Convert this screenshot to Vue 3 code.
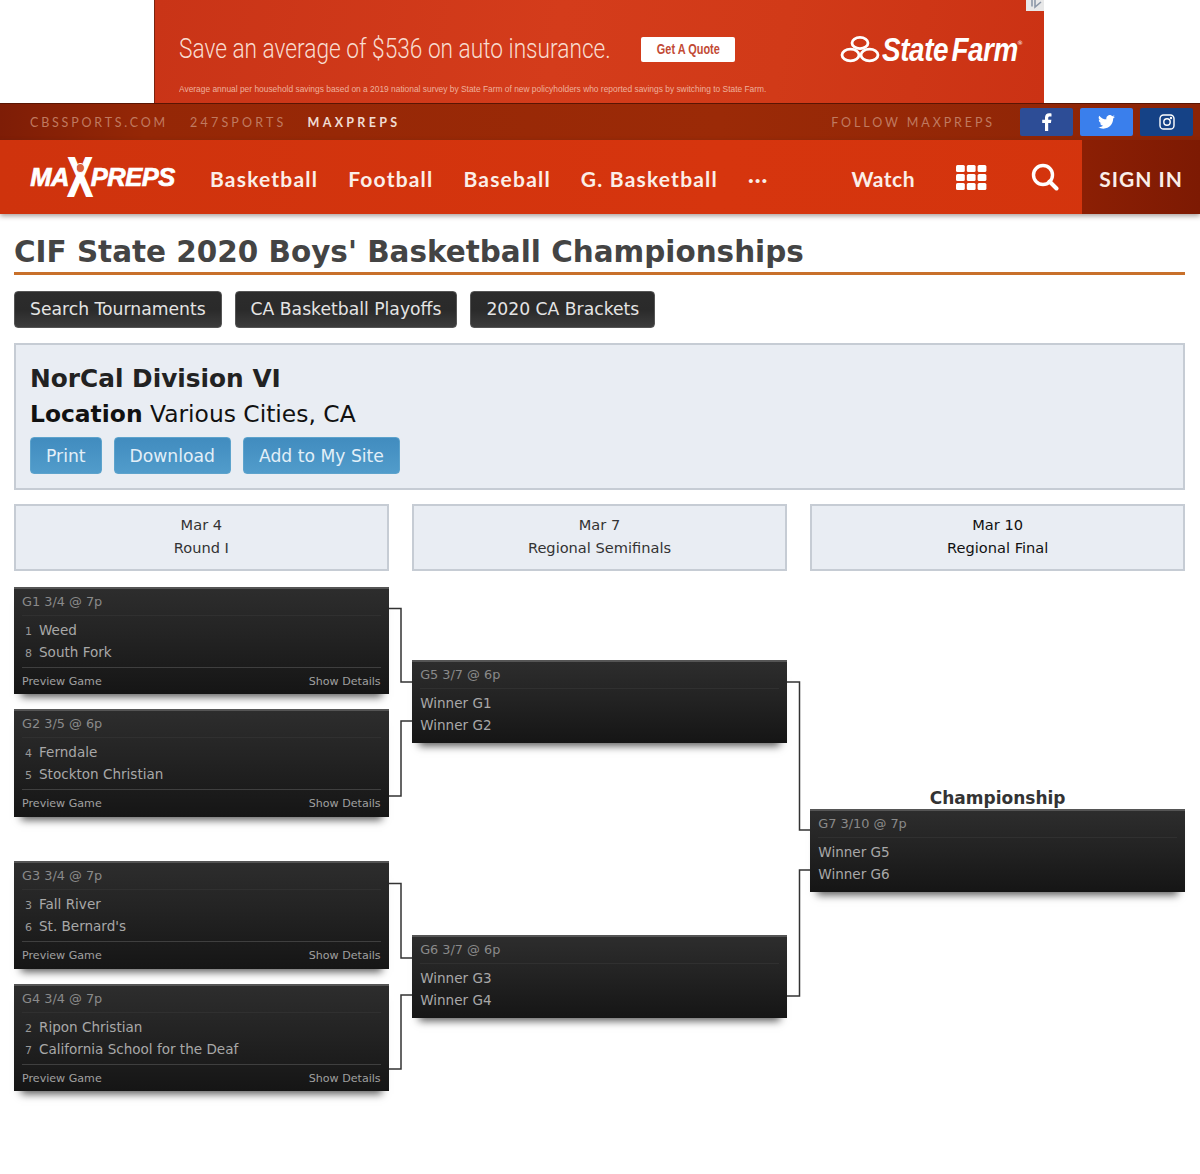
<script setup>
const networks = [
  { name: 'CBSSPORTS.COM', cls: 'cbs' },
  { name: '247SPORTS', cls: 'two47' },
  { name: 'MAXPREPS', cls: 'current' },
]

const navLinks = ['Basketball', 'Football', 'Baseball', 'G. Basketball']

const topButtons = ['Search Tournaments', 'CA Basketball Playoffs', '2020 CA Brackets']
const blueButtons = ['Print', 'Download', 'Add to My Site']

const rounds = [
  {
    id: 'first',
    date: 'Mar 4',
    name: 'Round I',
    games: [
      { title: 'G1 3/4 @ 7p', full: true, teams: [{ seed: 1, name: 'Weed' }, { seed: 8, name: 'South Fork' }] },
      { title: 'G2 3/5 @ 6p', full: true, teams: [{ seed: 4, name: 'Ferndale' }, { seed: 5, name: 'Stockton Christian' }] },
      { title: 'G3 3/4 @ 7p', full: true, teams: [{ seed: 3, name: 'Fall River' }, { seed: 6, name: "St. Bernard's" }] },
      { title: 'G4 3/4 @ 7p', full: true, teams: [{ seed: 2, name: 'Ripon Christian' }, { seed: 7, name: 'California School for the Deaf' }] },
    ],
  },
  {
    id: 'second',
    date: 'Mar 7',
    name: 'Regional Semifinals',
    games: [
      { title: 'G5 3/7 @ 6p', teams: [{ name: 'Winner G1' }, { name: 'Winner G2' }] },
      { title: 'G6 3/7 @ 6p', teams: [{ name: 'Winner G3' }, { name: 'Winner G4' }] },
    ],
  },
  {
    id: 'final',
    date: 'Mar 10',
    name: 'Regional Final',
    label: 'Championship',
    games: [
      { title: 'G7 3/10 @ 7p', teams: [{ name: 'Winner G5' }, { name: 'Winner G6' }] },
    ],
  },
]

// bracket lines, y is measured from the top of the bracket block
const connectors = [
  'M388 104.5H401V178H412',
  'M388 292H401V217H412',
  'M388 379.5H401V454H412',
  'M388 565H401V491H412',
  'M787 178H799.5V326H810',
  'M787 492H799.5V366H810',
]
</script>

<template>
  <div class="page">
    <div class="ad-strip">
      <div class="ad">
        <div class="ad-main">
          <span class="ad-headline"><span>Save an average of $536 on auto insurance.</span></span>
          <span class="ad-quote"><span>Get A Quote</span></span>
          <span class="sf-logo">
            <svg width="40" height="28" viewBox="0 0 40 28">
              <g fill="none" stroke="#fff" stroke-width="2.800">
                <ellipse cx="20" cy="8" rx="8" ry="5.600" />
                <ellipse cx="10.500" cy="20" rx="8.500" ry="5.800" />
                <ellipse cx="29.500" cy="20" rx="8.500" ry="5.800" />
              </g>
            </svg>
            <span class="sf-name"><span>State<i>Farm</i></span></span>
            <sup class="sf-reg">®</sup>
          </span>
        </div>
        <p class="ad-small"><span>Average annual per household savings based on a 2019 national survey by State Farm of new policyholders who reported savings by switching to State Farm.</span></p>
        <svg class="ad-choices" width="18" height="11" viewBox="0 0 18 11">
          <rect width="18" height="11" fill="#e8e8e8" />
          <path d="M6 -1V6.500M9 -1V7L15 2" fill="none" stroke="#8d98a8" stroke-width="1.600" />
        </svg>
      </div>
    </div>

    <div class="network-bar">
      <a v-for="n in networks" :key="n.name" class="network" :class="n.cls">{{ n.name }}</a>
      <span class="follow">FOLLOW MAXPREPS</span>
      <a class="social fb">
        <svg width="11" height="18" viewBox="0 0 11 18"><path fill="#fff" d="M7.200 18V10h2.700l.5-3.200H7.200V4.900c0-.9.3-1.500 1.600-1.500h1.700V.5C10.200.4 9.200.3 8.100.3 5.700.3 4 1.800 4 4.500v2.300H1.200V10H4v8z" /></svg>
      </a>
      <a class="social tw">
        <svg width="17" height="14" viewBox="0 0 24 20"><path fill="#fff" d="M24 2.400c-.9.4-1.800.7-2.800.8 1-.6 1.800-1.600 2.200-2.700-1 .6-2 1-3.100 1.200A4.900 4.900 0 0 0 11.900 6.200 14 14 0 0 1 1.700.9a4.900 4.900 0 0 0 1.500 6.600c-.8 0-1.600-.2-2.200-.6 0 2.400 1.700 4.400 3.900 4.900-.7.200-1.500.2-2.200.1.600 2 2.400 3.400 4.600 3.400A9.900 9.900 0 0 1 0 17.300 14 14 0 0 0 7.500 19.500c9.100 0 14.300-7.700 14-14.600 1-.7 1.800-1.500 2.500-2.500z" /></svg>
      </a>
      <a class="social ig">
        <svg width="16" height="16" viewBox="0 0 16 16" fill="none" stroke="#fff" stroke-width="1.400">
          <rect x="1" y="1" width="14" height="14" rx="3.600" />
          <circle cx="8" cy="8" r="3.200" />
          <circle cx="12" cy="4" r=".5" fill="#fff" />
        </svg>
      </a>
    </div>

    <header class="main-nav">
      <a class="logo">
        <span class="logo-word">MA</span>
        <span class="logo-x">X<i class="logo-head"></i></span>
        <span class="logo-word">PREPS</span>
      </a>
      <nav class="nav-links">
        <a v-for="link in navLinks" :key="link">{{ link }}</a>
        <a class="more">···</a>
      </nav>
      <a class="watch">Watch</a>
      <a class="grid-icon">
        <svg width="31" height="25" viewBox="0 0 31 25" fill="#fff">
          <template v-for="row in 3" :key="row">
            <rect v-for="col in 3" :key="col" :x="(col - 1) * 10.800" :y="(row - 1) * 9" width="8.800" height="7" rx="1.500" />
          </template>
        </svg>
      </a>
      <a class="search-icon">
        <svg width="28" height="28" viewBox="0 0 28 28" fill="none" stroke="#fff">
          <circle cx="12" cy="12" r="9.500" stroke-width="3.400" />
          <path d="M18.500 18.500L25.500 25.500" stroke-width="4" stroke-linecap="round" />
        </svg>
      </a>
      <a class="sign-in">SIGN IN</a>
    </header>

    <main class="content">
      <h1 class="page-title">CIF State 2020 Boys' Basketball Championships</h1>

      <div class="top-buttons">
        <a v-for="b in topButtons" :key="b" class="btn-dark">{{ b }}</a>
      </div>

      <section class="info-panel">
        <h2>NorCal Division VI</h2>
        <p class="location"><b>Location</b> Various Cities, CA</p>
        <div class="blue-buttons">
          <a v-for="b in blueButtons" :key="b" class="btn-blue">{{ b }}</a>
        </div>
      </section>
    </main>

    <section class="bracket">
      <svg class="lines" width="1200" height="600" viewBox="0 0 1200 600">
        <path v-for="d in connectors" :key="d" :d="d" fill="none" stroke="#333" stroke-width="1.500" />
      </svg>

      <div v-for="round in rounds" :key="round.id" class="round" :class="round.id">
        <div class="round-head">
          <div>{{ round.date }}</div>
          <div>{{ round.name }}</div>
        </div>
        <div v-if="round.label" class="round-label">{{ round.label }}</div>
        <article v-for="game in round.games" :key="game.title" class="game">
          <div class="game-title">{{ game.title }}</div>
          <div class="teams">
            <div v-for="team in game.teams" :key="team.name" class="team">
              <span v-if="team.seed" class="seed">{{ team.seed }}</span>
              <span>{{ team.name }}</span>
            </div>
          </div>
          <div v-if="game.full" class="game-foot">
            <span>Preview Game</span>
            <span>Show Details</span>
          </div>
        </article>
      </div>
    </section>
  </div>
</template>

<style>
html, body {
  margin: 0;
  background: #fff;
}
</style>

<style scoped>
.page {
  height: 1174px;
  overflow: hidden;
  font-family: "DejaVu Sans", Verdana, sans-serif;
  color: #222;
}

/* ad */
.ad-strip {
  height: 103px;
  padding-left: 154px;
}

.ad {
  position: relative;
  box-sizing: border-box;
  width: 890px;
  height: 103px;
  padding: 0 21px 0 24px;
  color: #f6d9cd;
  background: linear-gradient(100deg, #c93417 0%, #d43c1b 45%, #d13a18 70%, #cb3214 100%);
  border-left: 1px solid #7a2410;
  display: flex;
  flex-direction: column;
}

.ad-main {
  display: flex;
  align-items: center;
  height: 83px;
  padding-top: 15px;
  box-sizing: border-box;
}

.ad-headline {
  width: 435px;
  flex: none;
  font-family: Roboto, "Liberation Sans", sans-serif;
  font-weight: 300;
  font-size: 27px;
  color: #f8dcd0;
}

.ad-headline span {
  display: inline-block;
  white-space: nowrap;
  transform: scaleX(.84);
  transform-origin: left center;
}

.ad-quote {
  margin-left: 27px;
  width: 94px;
  height: 25px;
  line-height: 25px;
  text-align: center;
  background: #fff;
  border-radius: 2px;
  font-family: "Liberation Sans", sans-serif;
  font-size: 14px;
  font-weight: 700;
  color: #c24a35;
  overflow: hidden;
}

.ad-quote span {
  display: inline-block;
  white-space: nowrap;
  transform: scaleX(.78);
}

.sf-logo {
  margin-left: auto;
  display: flex;
  align-items: center;
  color: #fff;
}

.sf-name {
  width: 135px;
  margin-left: 2px;
  font-family: "Liberation Sans", sans-serif;
  font-size: 34px;
  font-weight: 700;
  font-style: italic;
  letter-spacing: -.5px;
}

.sf-name span {
  display: inline-block;
  white-space: nowrap;
  transform: scaleX(.82);
  transform-origin: left center;
}

.sf-name i {
  margin-left: 4px;
}

.sf-reg {
  font-size: 6px;
  margin-top: -14px;
}

.ad-small {
  margin: 0;
  font-family: "Liberation Sans", sans-serif;
  font-size: 9.500px;
  line-height: 12px;
  color: #eeb09c;
  width: 588px;
}

.ad-small span {
  display: inline-block;
  white-space: nowrap;
  transform: scaleX(.883);
  transform-origin: left center;
}

.ad-choices {
  position: absolute;
  top: 0;
  right: 0;
}

/* network bar */
.network-bar {
  box-sizing: border-box;
  height: 37px;
  padding: 0 7px 0 30px;
  display: flex;
  align-items: center;
  background: linear-gradient(90deg, #7e1d06 0%, #952706 12%, #9b2a07 60%, #8c2406 100%);
  border-top: 1px solid #5a1503;
  font-family: Lato, "Open Sans", sans-serif;
  font-size: 12.500px;
  letter-spacing: 3.200px;
}

.network {
  margin-right: 22px;
  color: #c07a60;
}

.network.cbs {
  letter-spacing: 2.800px;
}

.network.two47 {
  margin-right: 21px;
}

.network.current {
  color: #f0dcd2;
  font-weight: 700;
  letter-spacing: 3.300px;
}

.follow {
  margin-left: auto;
  margin-right: 25px;
  letter-spacing: 2.900px;
  color: #c07a60;
}

.social {
  width: 53px;
  height: 28px;
  margin-left: 7px;
  display: flex;
  align-items: center;
  justify-content: center;
  border-radius: 2px;
}

.social.fb {
  background: #2d4d96;
  margin-left: 0;
}

.social.tw {
  background: #3a7fec;
}

.social.ig {
  background: #154286;
}

/* main nav */
.main-nav {
  position: relative;
  height: 74px;
  display: flex;
  align-items: center;
  padding-left: 30px;
  background: linear-gradient(90deg, #cf330d 0%, #d6350e 60%, #d3340d 100%);
  box-shadow: 0 2px 5px rgba(60, 40, 30, .45);
  font-family: Lato, "Open Sans", sans-serif;
  font-weight: 700;
  font-size: 21px;
  letter-spacing: 1.200px;
  color: #fbeee8;
}

.logo {
  width: 145px;
  height: 42px;
  display: flex;
  align-items: center;
  justify-content: center;
  color: #fff;
  font-family: "Liberation Sans", Arial, sans-serif;
  font-style: italic;
  font-weight: 700;
  letter-spacing: -.5px;
  -webkit-text-stroke: .7px #fff;
}

.logo-word {
  font-size: 25.500px;
  white-space: nowrap;
}

.logo-x {
  position: relative;
  font-style: normal;
  font-size: 56px;
  line-height: 42px;
  margin: 0 -4px;
  width: 30px;
  display: flex;
  justify-content: center;
  transform: scaleX(.66);
  -webkit-text-stroke: 1.800px #fff;
}

.logo-head {
  position: absolute;
  top: 7px;
  left: 9px;
  width: 11px;
  height: 8px;
  border-radius: 50%;
  background: #d9603e;
  border: 1px solid #fff;
}

.nav-links {
  display: flex;
  gap: 30px;
  margin-left: 35px;
  padding-top: 2px;
}

.more {
  letter-spacing: 1px;
}

.watch {
  margin-left: auto;
  padding-top: 2px;
  letter-spacing: .5px;
}

.grid-icon {
  margin-left: 41px;
  display: flex;
}

.search-icon {
  margin-left: 44px;
  display: flex;
}

.sign-in {
  margin-left: 23px;
  width: 118px;
  height: 100%;
  padding-top: 2px;
  box-sizing: border-box;
  display: flex;
  align-items: center;
  justify-content: center;
  background: linear-gradient(90deg, #8c1f04, #7d1a03);
  letter-spacing: 1px;
}

/* heading + panel */
.content {
  padding: 0 15px 0 14px;
}

.page-title {
  margin: 0;
  padding-top: 19px;
  height: 39px;
  line-height: 39px;
  font-size: 29.450px;
  font-weight: 700;
  color: #444;
  border-bottom: 3px solid #c8702a;
}

.top-buttons {
  display: flex;
  gap: 13px;
  margin-top: 16px;
}

.btn-dark {
  box-sizing: border-box;
  height: 37px;
  line-height: 35px;
  padding: 0 15px;
  border-radius: 4px;
  border: 1px solid #555;
  background: linear-gradient(#2c2c2c, #2a2a2a 50%, #3c3c3c);
  color: #e4e4e4;
  font-size: 17.200px;
}

.info-panel {
  box-sizing: border-box;
  height: 146.500px;
  margin-top: 15px;
  padding: 18px 14px 0;
  border: 2px solid #c6ccd4;
  background: #e9edf3;
}

.info-panel h2 {
  margin: 0;
  font-size: 24.800px;
  line-height: 32px;
  color: #222;
}

.location {
  margin: 1px 0 0;
  font-size: 23.400px;
  line-height: 36px;
  color: #111;
}

.blue-buttons {
  display: flex;
  gap: 12px;
  margin-top: 5px;
}

.btn-blue {
  box-sizing: border-box;
  height: 37px;
  line-height: 36px;
  padding: 0 15px;
  border-radius: 4px;
  border: 1px solid #5da3cc;
  background: linear-gradient(#418cbf, #519ccb);
  color: #e2eff8;
  font-size: 17.200px;
}

/* bracket */
.bracket {
  position: relative;
  display: grid;
  grid-template-columns: repeat(3, 1fr);
  gap: 23.500px;
  padding: 0 15px 0 14px;
  margin-top: 14.500px;
}

.lines {
  position: absolute;
  top: 0;
  left: 0;
}

.round {
  display: flex;
  flex-direction: column;
}

.round-head {
  box-sizing: border-box;
  height: 66.500px;
  padding-top: 8px;
  border: 2px solid #c6ccd4;
  background: #e9edf3;
  text-align: center;
  font-size: 14.600px;
  line-height: 22.500px;
  color: #333;
}

.round.final .round-head {
  color: #111;
}

.game {
  position: relative;
  padding: 0 8px;
  background: linear-gradient(#2d2d2d, #232323 45%, #151515);
  border-top: 2px solid #555;
  box-sizing: border-box;
  box-shadow: 0 10px 8px -7px rgba(0, 0, 0, .65);
  color: #a8a8a8;
}

.game-title {
  height: 26px;
  line-height: 26px;
  font-size: 12.850px;
  color: #8a8a8a;
  border-bottom: 1px solid #303030;
}

.teams {
  padding: 3px 0 7px;
}

.team {
  height: 22px;
  line-height: 22px;
  font-size: 13.550px;
  white-space: nowrap;
}

.seed {
  display: inline-block;
  width: 17px;
  padding-left: 3px;
  box-sizing: border-box;
  font-size: 11px;
  color: #999;
}

.game-foot {
  display: flex;
  justify-content: space-between;
  box-sizing: border-box;
  height: 27.500px;
  line-height: 27px;
  margin-top: -3px;
  font-size: 11.100px;
  color: #a0a0a0;
  border-top: 1px solid #3f3f3f;
}

.round.first .game {
  margin-top: 15px;
}

.round.first .game:nth-of-type(1) {
  margin-top: 16.200px;
}

.round.first .game:nth-of-type(3) {
  margin-top: 44.500px;
}

.round.second .game:nth-of-type(1) {
  margin-top: 89.500px;
}

.round.second .game:nth-of-type(2) {
  margin-top: 192px;
}

.round-label {
  margin-top: 216.500px;
  height: 22px;
  line-height: 22px;
  text-align: center;
  font-size: 17px;
  font-weight: 700;
  color: #333;
}
</style>
